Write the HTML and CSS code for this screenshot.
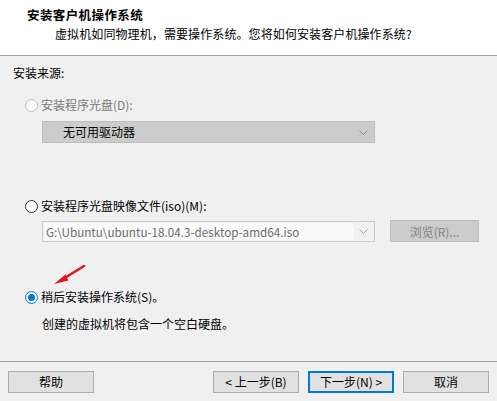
FILE: index.html
```html
<!DOCTYPE html>
<html lang="zh-CN">
<head>
<meta charset="utf-8">
<title>新建虚拟机向导</title>
<link rel="stylesheet" href="styles.css">
</head>
<body>
<div class="wizard">
  <header class="header">
    <div class="title">安装客户机操作系统</div>
    <div class="subtitle">虚拟机如同物理机，需要操作系统。您将如何安装客户机操作系统?</div>
  </header>
  <main class="main">
    <div class="section-label">安装来源:</div>

    <div class="radio-row row-disc disabled">
      <span class="radio radio-disabled"></span>
      <span class="radio-text">安装程序光盘(D):</span>
    </div>
    <div class="combo combo-disabled">
      <span class="combo-text">无可用驱动器</span>
      <svg class="chev" width="9" height="5" viewBox="0 0 9 5"><path d="M0.5 0.5 L4.5 4.5 L8.5 0.5" fill="none" stroke="#8c8c8c" stroke-width="1"/></svg>
    </div>

    <div class="radio-row row-iso">
      <span class="radio"></span>
      <span class="radio-text">安装程序光盘映像文件(iso)(M):</span>
    </div>
    <div class="iso-line">
      <div class="iso-combo">
        <div class="iso-field">G:\Ubuntu\ubuntu-18.04.3-desktop-amd64.iso</div>
        <div class="iso-arrow">
          <svg width="9" height="5" viewBox="0 0 9 5"><path d="M0.5 0.5 L4.5 4.5 L8.5 0.5" fill="none" stroke="#a8a8a8" stroke-width="1"/></svg>
        </div>
      </div>
      <div class="browse">浏览(R)...</div>
    </div>

    <div class="later-block">
      <svg class="pointer" width="36" height="24" viewBox="0 0 36 24">
        <path d="M33 2 L12 15" stroke="#e3151b" stroke-width="2.6" stroke-linecap="round" fill="none"/>
        <path d="M3 20 L14.5 10.5 L17.5 16.5 Z" fill="#e3151b"/>
      </svg>
      <div class="radio-row row-later">
        <span class="radio radio-checked"></span>
        <span class="radio-text">稍后安装操作系统(S)。</span>
      </div>
      <div class="desc">创建的虚拟机将包含一个空白硬盘。</div>
    </div>
  </main>
  <footer class="footer">
    <div class="btn">帮助</div>
    <div class="btn-group">
      <div class="btn">&lt; 上一步(B)</div>
      <div class="btn btn-default">下一步(N) &gt;</div>
      <div class="btn">取消</div>
    </div>
  </footer>
</div>
</body>
</html>
```
FILE: styles.css
```css
* { box-sizing: border-box; }
html, body { margin: 0; padding: 0; }
body {
  width: 497px;
  height: 401px;
  overflow: hidden;
  background: #f0f0f0;
  font-family: "Noto Sans CJK SC", "Noto Sans", sans-serif;
  font-size: 12px;
  color: #000;
}
.wizard {
  display: flex;
  flex-direction: column;
  height: 401px;
}
.header {
  height: 56px;
  background: #ffffff;
  border-bottom: 1px solid #a0a0a0;
  padding: 7px 0 0 27px;
}
.title {
  font-weight: bold;
  font-size: 12.5px;
  line-height: 16px;
  letter-spacing: 0.4px;
}
.subtitle {
  margin-top: 3px;
  margin-left: 28px;
  line-height: 16px;
  font-size: 12px;
  letter-spacing: 0.1px;
}
.main {
  flex: 1;
  position: relative;
  padding: 9px 0 0 13px;
}
.section-label { line-height: 16px; }
.radio-row {
  display: flex;
  align-items: center;
  height: 16px;
  margin-left: 12px;
}
.radio-text { margin-left: 3px; line-height: 16px; }
.row-disc { margin-top: 16px; }
.disabled .radio-text { color: #7a7a7a; }
.radio {
  width: 13px;
  height: 13px;
  border-radius: 50%;
  border: 1px solid #333333;
  background: #ffffff;
  position: relative;
  flex: none;
}
.radio-disabled { border-color: #bcbcbc; background: #fcfcfc; }
.radio-checked { border-color: #0078d7; }
.radio-checked::after {
  content: "";
  position: absolute;
  left: 2px;
  top: 2px;
  width: 7px;
  height: 7px;
  border-radius: 50%;
  background: #0078d7;
}
.combo {
  margin: 8px 0 0 29px;
  width: 333px;
  height: 22px;
  display: flex;
  align-items: center;
  justify-content: space-between;
}
.combo-disabled {
  background: #cccccc;
  border: 1px solid #bfbfbf;
  padding: 0 6px 0 20px;
}
.combo-text { line-height: 16px; }
.row-iso { margin-top: 55px; }
.iso-line {
  display: flex;
  align-items: center;
  margin: 6px 0 0 29px;
  height: 22px;
}
.iso-combo {
  width: 333px;
  height: 21px;
  border: 1px solid #cccccc;
  background: #f0f0f0;
  display: flex;
  padding: 1px;
}
.iso-field {
  flex: 1;
  background: #f9f9f9;
  color: #6d6d6d;
  line-height: 17px;
  padding-left: 2px;
  font-size: 11.7px;
  white-space: nowrap;
  overflow: hidden;
}
.iso-arrow {
  width: 19px;
  display: flex;
  align-items: center;
  justify-content: center;
}
.browse {
  margin-left: 15px;
  width: 89px;
  height: 22px;
  background: #cccccc;
  border: 1px solid #bfbfbf;
  color: #838383;
  display: flex;
  align-items: center;
  justify-content: center;
}
.later-block { position: relative; margin-top: 47px; }
.pointer {
  position: absolute;
  left: 38px;
  top: -25px;
}
.desc {
  margin: 11px 0 0 29px;
  line-height: 16px;
}
.footer {
  height: 40px;
  border-top: 1px solid #a0a0a0;
  padding: 9px 8px 0 8px;
  display: flex;
  justify-content: space-between;
  align-items: flex-start;
}
.btn-group { display: flex; gap: 9px; }
.btn {
  width: 86px;
  height: 22px;
  background: #e1e1e1;
  border: 1px solid #adadad;
  display: flex;
  align-items: center;
  justify-content: center;
  line-height: 16px;
}
.btn-default { border: 2px solid #0078d7; }
```
